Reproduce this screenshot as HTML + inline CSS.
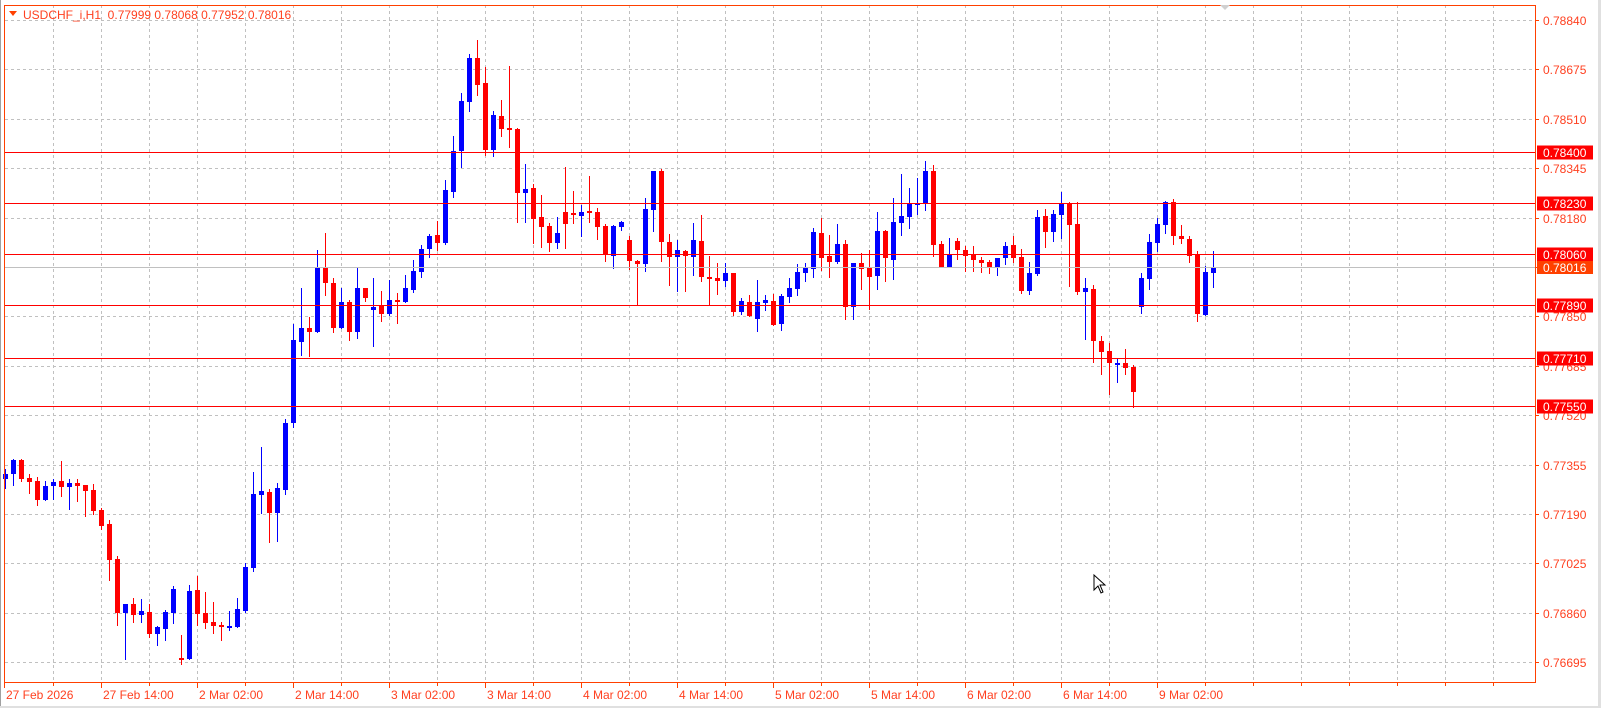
<!DOCTYPE html>
<html><head><meta charset="utf-8"><style>
html,body{margin:0;padding:0;background:#fff;}
body{width:1601px;height:708px;overflow:hidden;position:relative;font-family:"Liberation Sans",sans-serif;}
svg{position:absolute;left:0;top:0;}
</style></head><body>
<svg id="s" width="1601" height="708" xmlns="http://www.w3.org/2000/svg" font-family="Liberation Sans, sans-serif" font-size="12"></svg>
<script>
var S=document.getElementById('s'),h='';
h+='<rect x="0" y="0" width="1601" height="708" fill="#fff"/>';
h+='<rect x="0" y="0" width="1" height="708" fill="#a0a0a0"/><rect x="1598" y="0" width="3" height="708" fill="#e0e0e0"/><rect x="0" y="706" width="1601" height="2" fill="#e0e0e0"/>';
// grid
for(var x=53;x<=1493;x+=48){h+='<line x1="'+(x+.5)+'" y1="5" x2="'+(x+.5)+'" y2="682" stroke="#c0c0c0" stroke-dasharray="3,3"/>';
 h+='<line x1="'+(x+.5)+'" y1="682" x2="'+(x+.5)+'" y2="686" stroke="#ff4000"/>';}
var labs=['0.78840','0.78675','0.78510','0.78345','0.78180','0.78015','0.77850','0.77685','0.77520','0.77355','0.77190','0.77025','0.76860','0.76695'];
for(var i=0;i<14;i++){var y=Math.round(20+49.4*i)+.5;
 h+='<line x1="5" y1="'+y+'" x2="1535" y2="'+y+'" stroke="#c0c0c0" stroke-dasharray="3,3"/>';
 h+='<line x1="1535" y1="'+y+'" x2="1539" y2="'+y+'" stroke="#ff4000"/>';
 h+='<text x="1543" y="'+(y+4.5)+'" fill="#ff4020">'+labs[i]+'</text>';}
// candles: [open/top,bodybottom,high,low,color]
var C=[
[474,479,469,488,'b'],[460,474,459,485,'b'],[460,479,459,481,'r'],[478,482,474,493,'r'],[481,500,477,505,'r'],[486,500,481,500,'b'],[482,486,479,499,'b'],[481,487,461,496,'r'],[483,487,479,509,'b'],[483,486,479,501,'r'],
[485,491,485,516,'r'],[490,511,484,514,'r'],[510,526,508,529,'r'],[524,560,520,580,'r'],[559,613,556,625,'r'],[604,613,604,659,'b'],[604,615,598,622,'r'],[611,615,599,622,'b'],[612,634,604,637,'r'],[627,634,626,645,'b'],
[612,629,610,640,'b'],[589,613,586,623,'b'],[658,660,635,664,'r'],[591,659,585,659,'b'],[590,614,576,625,'r'],[613,623,592,628,'r'],[622,626,602,633,'r'],[625,627,622,640,'r'],[626,627,611,630,'b'],[609,627,598,627,'b'],
[567,611,563,612,'b'],[494,568,472,571,'b'],[491,495,447,513,'b'],[492,513,489,542,'r'],[488,513,483,541,'b'],[423,490,419,494,'b'],[340,423,324,427,'b'],[328,342,288,355,'b'],[328,332,317,356,'r'],[267,332,250,332,'b'],
[267,283,233,295,'r'],[283,328,278,332,'r'],[302,328,288,328,'b'],[302,332,300,340,'r'],[288,332,267,338,'b'],[288,298,288,301,'r'],[307,310,278,346,'b'],[305,314,291,321,'r'],[300,314,280,315,'b'],[300,302,293,323,'r'],
[288,302,275,302,'b'],[271,290,260,292,'b'],[249,272,245,277,'b'],[236,249,234,257,'b'],[235,243,221,250,'r'],[190,243,180,244,'b'],[151,192,136,197,'b'],[101,151,93,167,'b'],[58,102,54,111,'b'],[58,85,40,95,'r'],
[83,150,67,155,'r'],[115,150,111,156,'b'],[116,129,100,136,'r'],[128,129,66,147,'r'],[129,193,128,222,'r'],[189,193,164,222,'b'],[188,219,184,243,'r'],[217,227,195,247,'r'],[226,243,223,251,'r'],[233,243,217,248,'b'],
[212,224,167,248,'r'],[213,215,191,223,'r'],[212,216,205,236,'b'],[211,213,176,222,'r'],[212,227,208,239,'r'],[226,255,224,261,'r'],[226,256,225,268,'b'],[222,227,221,230,'b'],[240,261,236,269,'r'],[261,264,260,305,'r'],
[209,264,198,271,'b'],[171,210,171,231,'b'],[171,242,169,261,'r'],[242,257,234,285,'r'],[250,257,240,291,'b'],[251,256,250,291,'r'],[240,257,223,275,'b'],[241,277,215,281,'r'],[277,279,256,304,'r'],[278,281,263,294,'r'],
[273,281,263,286,'b'],[273,312,273,315,'r'],[301,312,298,314,'b'],[302,316,295,316,'r'],[302,319,280,331,'b'],[300,303,295,310,'b'],[301,325,294,325,'r'],[296,324,294,330,'b'],[288,297,278,302,'b'],[272,289,264,295,'b'],
[268,273,263,281,'b'],[232,269,228,277,'b'],[233,258,218,270,'r'],[256,262,235,277,'r'],[244,262,224,263,'b'],[244,307,240,319,'r'],[263,307,263,319,'b'],[263,269,253,289,'r'],[268,277,250,309,'r'],[231,276,212,289,'b'],
[231,258,230,281,'r'],[222,260,198,279,'b'],[216,223,174,235,'b'],[204,217,188,228,'b'],[203,205,178,214,'b'],[171,203,161,210,'b'],[171,245,165,256,'r'],[244,267,241,267,'r'],[255,267,238,267,'b'],[241,250,238,259,'r'],
[250,256,246,271,'r'],[255,260,246,271,'r'],[260,263,257,272,'r'],[262,268,260,273,'r'],[258,268,258,275,'b'],[246,258,242,264,'b'],[245,258,236,262,'r'],[257,291,249,293,'r'],[273,291,262,294,'b'],[217,274,210,275,'b'],
[216,232,209,247,'r'],[214,232,210,241,'b'],[204,215,192,238,'b'],[204,225,202,286,'r'],[224,292,202,294,'r'],[288,292,278,339,'b'],[289,341,285,362,'r'],[341,352,336,374,'r'],[351,363,343,394,'r'],[363,364,358,382,'b'],
[363,368,349,374,'r'],[367,392,365,407,'r'],[278,307,273,313,'b'],[242,279,234,289,'b'],[224,243,218,251,'b'],[202,225,201,233,'b'],[202,236,199,244,'r'],[236,239,225,243,'r'],[239,256,236,262,'r'],[254,314,251,321,'r'],
[272,315,266,315,'b'],[267,273,251,287,'b']];
for(var k=0;k<C.length;k++){var c=C[k],cx=5+8*k,col=c[4]=='b'?'#0000ff':'#ff0000';
 h+='<rect x="'+cx+'" y="'+c[2]+'" width="1" height="'+(c[3]-c[2]+1)+'" fill="'+col+'"/>';
 h+='<rect x="'+(cx-2)+'" y="'+c[0]+'" width="5" height="'+Math.max(2,c[1]-c[0])+'" fill="'+col+'"/>';}
// bid line
h+='<line x1="5" y1="267.5" x2="1535" y2="267.5" stroke="#c0c0c0"/>';
// horizontal levels
var L=[[152,'0.78400'],[203,'0.78230'],[254,'0.78060'],[305,'0.77890'],[358,'0.77710'],[406,'0.77550']];
for(var i=0;i<L.length;i++){var y=L[i][0]+.5;
 h+='<line x1="5" y1="'+y+'" x2="1535" y2="'+y+'" stroke="#ff0000"/>';
 h+='<rect x="1537" y="'+(y-7)+'" width="56" height="14" fill="#ff0000"/>';
 h+='<text x="1543" y="'+(y+4.5)+'" fill="#fff">'+L[i][1]+'</text>';}
h+='<rect x="1537" y="261" width="56" height="13" fill="#ff4000"/><text x="1543" y="272" fill="#fff">0.78016</text>';
// frame
h+='<rect x="4.5" y="5.5" width="1531" height="677" fill="none" stroke="#ff4000"/>';
// dates
var D=['27 Feb 2026','27 Feb 14:00','2 Mar 02:00','2 Mar 14:00','3 Mar 02:00','3 Mar 14:00','4 Mar 02:00','4 Mar 14:00','5 Mar 02:00','5 Mar 14:00','6 Mar 02:00','6 Mar 14:00','9 Mar 02:00'];
for(var i=0;i<D.length;i++){var x=i==0?4:5+96*i; h+='<line x1="'+(x+.5)+'" y1="682" x2="'+(x+.5)+'" y2="688" stroke="#ff4000"/><text x="'+(x+2)+'" y="699" fill="#ff4020">'+D[i]+'</text>';}
// title
h+='<path d="M9 11 L17 11 L13 16 Z" fill="#ff4000"/>';
h+='<text x="23" y="19" fill="#ff4020">USDCHF_i,H1&#160;&#160;0.77999 0.78068 0.77952 0.78016</text>';
h+='<path d="M1220 5 L1230 5 L1225 10 Z" fill="#d0d0d0"/>';
// cursor
h+='<path d="M1094 575 L1094 590 L1098 586 L1101 593 L1103 592 L1100 585 L1105 585 Z" fill="#fff" stroke="#000" stroke-width="1"/>';
S.innerHTML=h;
</script>
</body></html>
